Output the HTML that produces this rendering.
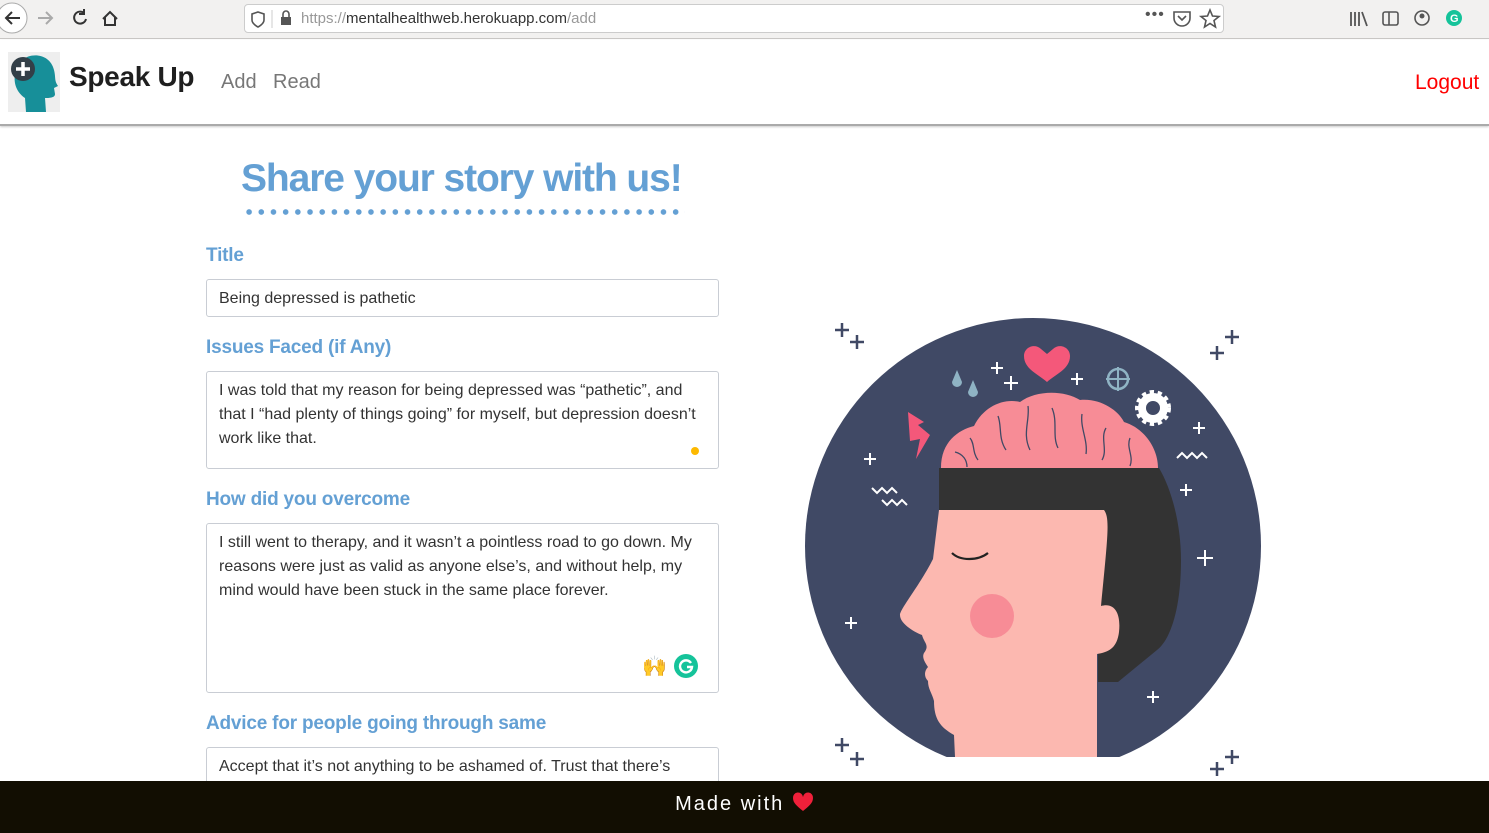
<!DOCTYPE html>
<html><head><meta charset="utf-8"><style>
*{box-sizing:border-box;margin:0;padding:0}
body{width:1489px;height:833px;overflow:hidden;background:#fff;font-family:"Liberation Sans",sans-serif;position:relative}
.chrome{position:absolute;left:0;top:0;width:1489px;height:39px;background:#f2f1f0;border-bottom:1px solid #c8c6c4}
.url{position:absolute;left:244px;top:4px;width:980px;height:29px;background:#fff;border:1px solid #ccc;border-radius:4px;font-size:15px;color:#999;line-height:27px;padding-left:56px}
.url b{font-weight:normal;color:#333}
.nav{position:absolute;left:0;top:40px;width:1489px;height:86px;border-bottom:2px solid #aaa;box-shadow:0 1px 2px #ccc}
.abs{position:absolute}
.lbl{position:absolute;left:206px;font-size:19px;font-weight:bold;color:#64a0d4;letter-spacing:-0.2px}
.box{position:absolute;left:206px;width:513px;border:1px solid #c9cdd4;border-radius:3px;font-size:16px;color:#333;line-height:24px;padding:7px 12px}
.foot{position:absolute;left:0;top:781px;width:1489px;height:52px;background:#120e02;color:#fff;font-size:20px;letter-spacing:2px;text-align:center;line-height:46px}
</style></head><body>
<div class="chrome">
<svg class="abs" style="left:0;top:0" width="130" height="39"><circle cx="12" cy="18" r="15" fill="#fff" stroke="#aaa"/><path d="M20 18H6M12 12l-6 6 6 6" stroke="#333" stroke-width="2" fill="none"/><path d="M38 18h14M46 12l6 6-6 6" stroke="#aaa" stroke-width="2" fill="none"/><path d="M84 13a6 6 0 1 0 2 6M84 9v5h-5" stroke="#333" stroke-width="2" fill="none"/><path d="M103 19l7-7 7 7M105 17v8h10v-8" stroke="#333" stroke-width="2" fill="none"/></svg>
<div class="url">https://<b>mentalhealthweb.herokuapp.com</b>/add</div>
<svg class="abs" style="left:250px;top:8px" width="50" height="22"><path d="M8 4l6 2v6c0 4-6 7-6 7s-6-3-6-7V6z" stroke="#555" stroke-width="1.6" fill="none"/><line x1="22" y1="2" x2="22" y2="20" stroke="#ccc"/><rect x="31" y="9" width="10" height="8" fill="#555"/><path d="M33 9V6a3 3 0 0 1 6 0v3" stroke="#555" stroke-width="1.6" fill="none"/></svg>
<div class="abs" style="left:1145px;top:6px;font-size:16px;color:#555;letter-spacing:1px">•••</div>
<svg class="abs" style="left:1172px;top:8px" width="50" height="22"><path d="M2 4h16v6a8 8 0 0 1-16 0z" stroke="#555" stroke-width="1.6" fill="none"/><path d="M6 8l4 4 4-4" stroke="#555" stroke-width="1.6" fill="none"/><path d="M38 2l2.5 6 6.5.5-5 4 1.5 6.5-5.5-3.5-5.5 3.5 1.5-6.5-5-4 6.5-.5z" stroke="#555" stroke-width="1.6" fill="none"/></svg>
<svg class="abs" style="left:1348px;top:8px" width="120" height="22"><path d="M3 4v14M7 4v14M11 4v14M14 4l5 14" stroke="#555" stroke-width="1.8"/><rect x="35" y="4" width="15" height="13" rx="2" stroke="#555" stroke-width="1.6" fill="none"/><line x1="41" y1="4" x2="41" y2="17" stroke="#555" stroke-width="1.6"/><circle cx="74" cy="10" r="7" stroke="#555" stroke-width="1.6" fill="none"/><circle cx="74" cy="8" r="2.5" fill="#555"/><circle cx="106" cy="10" r="8" fill="#15c39a"/><text x="102" y="14" font-size="11" font-weight="bold" fill="#fff">G</text></svg>
</div>
<div class="nav">
<svg class="abs" style="left:8px;top:12px" width="52" height="60"><rect width="52" height="60" fill="#eee"/><path d="M14 8c10-8 28-6 32 10 2 8 0 10 4 16l-4 2 1 6c0 4-6 4-10 4l1 14H18l-1-14c-6-4-12-12-10-24z" fill="#178f99"/><circle cx="15" cy="17" r="12" fill="#333f48"/><path d="M15 10v14M8 17h14" stroke="#fff" stroke-width="3.5"/></svg>
<div class="abs" style="left:69px;top:21px;font-size:28px;font-weight:bold;color:#1f1f1f;letter-spacing:-0.3px">Speak Up</div>
<div class="abs" style="left:221px;top:31px;font-size:20px;color:#777">Add</div>
<div class="abs" style="left:273px;top:31px;font-size:20px;color:#777">Read</div>
<div class="abs" style="left:1415px;top:31px;font-size:21px;color:#f00">Logout</div>
</div>
<div class="abs" style="left:241px;top:157px;font-size:39px;font-weight:bold;color:#64a0d4;letter-spacing:-1.1px">Share your story with us!</div>
<div class="abs" style="left:243px;top:209px;width:442px;height:6px;background:radial-gradient(circle,#64a0d4 2.6px,transparent 3px) 0 0/12.2px 6px repeat-x"></div>
<div class="lbl" style="top:245px">Title</div>
<div class="box" style="top:279px;height:38px">Being depressed is pathetic</div>
<div class="lbl" style="top:337px">Issues Faced (if Any)</div>
<div class="box" style="top:371px;height:98px">I was told that my reason for being depressed was “pathetic”, and that I “had plenty of things going” for myself, but depression doesn’t work like that.</div>
<div class="abs" style="left:691px;top:447px;width:8px;height:8px;border-radius:50%;background:#fdb900"></div>
<div class="lbl" style="top:489px">How did you overcome</div>
<div class="box" style="top:523px;height:170px">I still went to therapy, and it wasn’t a pointless road to go down. My reasons were just as valid as anyone else’s, and without help, my mind would have been stuck in the same place forever.</div>
<div class="abs" style="left:642px;top:654px;font-size:20px;color:#f5b800">🙌</div>
<svg class="abs" style="left:674px;top:654px" width="24" height="24"><circle cx="12" cy="12" r="12" fill="#15c39a"/><path d="M17 9a6 6 0 1 0 1 4h-5" stroke="#fff" stroke-width="2.4" fill="none"/></svg>
<div class="lbl" style="top:713px">Advice for people going through same</div>
<div class="box" style="top:747px;height:50px">Accept that it’s not anything to be ashamed of. Trust that there’s</div>
<svg class="abs" style="left:800px;top:310px" width="470" height="470">
<defs><clipPath id="c"><rect x="0" y="0" width="470" height="447"/></clipPath></defs>
<circle cx="233" cy="236" r="228" fill="#404965" clip-path="url(#c)"/>
<g stroke="#404965" stroke-width="2.5" fill="none"><path d="M42 13v14M35 20h14M57 25v14M50 32h14M432 20v14M425 27h14M417 36v14M410 43h14M42 428v14M35 435h14M57 442v14M50 449h14M432 440v14M425 447h14M417 452v14M410 459h14"/></g>
<g stroke="#fff" stroke-width="2" fill="none"><path d="M197 52v12M191 58h12M211 66v14M204 73h14M277 63v12M271 69h12M399 112v12M393 118h12M70 143v12M64 149h12M386 174v12M380 180h12M405 240v16M397 248h16M51 307v12M45 313h12M353 381v12M347 387h12M72 178l5 5 5-5 5 5 5-5 5 5M82 190l5 5 5-5 5 5 5-5 5 5M377 148l5-5 5 5 5-5 5 5 5-5 5 5"/></g>
<path d="M157 60l-5 12a5 5 0 1 0 10 0z M173 70l-5 12a5 5 0 1 0 10 0z" fill="#8fb3c4"/>
<path d="M247 72c-9-8-23-13-23-26 0-9 11-13 17-7l6 5 6-5c6-6 17-2 17 7 0 13-14 18-23 26z" fill="#f4587a"/>
<circle cx="318" cy="69" r="10" stroke="#8fb3c4" stroke-width="2.5" fill="none"/><path d="M318 57v24M306 69h24" stroke="#8fb3c4" stroke-width="2"/>
<circle cx="353" cy="98" r="15" fill="#fff" stroke="#fff" stroke-width="6" stroke-dasharray="4 3.5"/><circle cx="353" cy="98" r="7" fill="#404965"/>
<path d="M108 102l16 10-6 3 12 10-14 24 4-20-10 2z" fill="#f4587a"/>
<path d="M141 158C141 132 158 120 174 116C184 96 204 88 220 92C236 80 264 80 280 90C300 88 318 100 324 112C344 118 358 138 358 158Z" fill="#f78c96"/>
<g stroke="#404965" stroke-width="1.3" fill="none"><path d="M170 128c5 6 2 14 8 22M198 106c4 10 0 22 8 34M228 96c2 14-6 28 2 44M252 98c6 14 0 28 6 40M282 104c-2 14 6 26 4 40M306 118c-6 10 2 22-4 32M330 128c-4 10 4 18 0 28M155 142c8 2 12 8 12 15"/></g>
<path d="M139 158H359C372 180 381 215 381 250C381 300 370 330 357 340L318 372H298V200H139Z" fill="#333"/>
<path d="M139 200h165c6 8 4 24 -3 96 14-4 20 8 18 26-2 16-10 20-22 22v103H155l-1-22c-14-8-20-16-20-34-2-8-6-12-6-20-4-4-4-10 0-14-4-6-6-10-4-14 6-8 0-10-2-18-10-4-22-12-22-20 0-6 20-30 33-56z" fill="#fcb8b0"/>
<circle cx="192" cy="306" r="22" fill="#f78c96"/>
<path d="M152 243c8 8 26 8 36 0" stroke="#222" stroke-width="2.2" fill="none"/>
</svg>
<div class="foot">Made with <svg width="22" height="20" style="vertical-align:-2px" viewBox="0 0 22 20"><path d="M11 19C5 14 1 11 1 6a5 5 0 0 1 10-1 5 5 0 0 1 10 1c0 5-4 8-10 13z" fill="#f0203a"/></svg></div>
</body></html>
